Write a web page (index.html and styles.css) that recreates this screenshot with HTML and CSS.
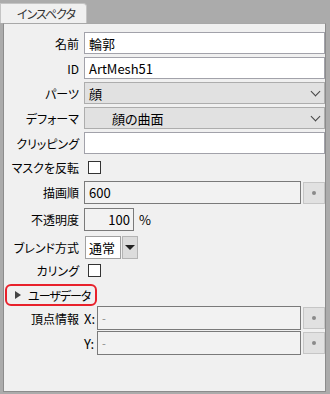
FILE: index.html
```html
<!DOCTYPE html>
<html lang="ja">
<head>
    <meta charset="UTF-8">
    <title>インスペクタ</title>
    <link rel="stylesheet" href="styles.css">
</head>
<body>
    <div class="tab">インスペクタ</div>
    <div class="panel">
        <div class="row">
            <label>名前</label>
            <div class="field text">輪郭</div>
        </div>
        <div class="row">
            <label>ID</label>
            <div class="field text">ArtMesh51</div>
        </div>
        <div class="row">
            <label>パーツ</label>
            <div class="field select">顔<span class="chev"></span></div>
        </div>
        <div class="row">
            <label>デフォーマ</label>
            <div class="field select indent">顔の曲面<span class="chev"></span></div>
        </div>
        <div class="row">
            <label>クリッピング</label>
            <div class="field text"></div>
        </div>
        <div class="row mask">
            <label>マスクを反転</label>
            <span class="check"></span>
        </div>
        <div class="row tall">
            <label>描画順</label>
            <div class="field num">600</div>
            <span class="dotbtn"></span>
        </div>
        <div class="row tall opacity">
            <label>不透明度</label>
            <div class="field num short">100</div>
            <span class="unit">%</span>
        </div>
        <div class="row tall blend">
            <label>ブレンド方式</label>
            <div class="combo"><span class="combo-val">通常</span><span class="combo-btn"></span></div>
        </div>
        <div class="row culling">
            <label>カリング</label>
            <span class="check"></span>
        </div>
        <div class="userdata"><span class="tri"></span>ユーザデータ</div>
        <div class="row vert">
            <label>頂点情報</label>
            <span class="axis">X:</span>
            <div class="field num dim">-</div>
            <span class="dotbtn"></span>
        </div>
        <div class="row vert">
            <label></label>
            <span class="axis">Y:</span>
            <div class="field num dim">-</div>
            <span class="dotbtn"></span>
        </div>
    </div>
</body>
</html>
```

FILE: styles.css
```css
body { margin: 0; background: #ababab; font-family: "Noto Sans CJK JP", "Noto Sans", sans-serif; font-size: 12px; color: #000; font-feature-settings: "palt"; white-space: nowrap; }

.tab { margin-top: 3px; width: 87px; height: 20px; line-height: 20px; box-sizing: border-box; padding-left: 16px; background: #f0f0f0; border: 1px solid #c4c4c4; border-bottom: none; border-top-right-radius: 4px; color: #333; font-size: 12px; letter-spacing: -1px; }

.panel { margin-left: 3px; width: 323px; height: 369px; box-sizing: border-box; background: #f0f0f0; border: 1px solid #8c8c8c; border-top-color: #a8a8a8; padding-top: 8px; display: flex; flex-direction: column; gap: 3px; }

.row { display: flex; align-items: center; height: 22px; }
.row.tall { height: 23px; }
.row.mask { height: 21px; }
.row.opacity { margin-top: 1px; }
.row.blend { margin-top: 2px; }
.row.culling { margin-top: -3px; }
.row label { width: 75px; padding-right: 5px; text-align: right; flex-shrink: 0; }

.field { box-sizing: border-box; height: 100%; display: flex; align-items: center; padding-left: 4px; }
.text { flex: 1; background: #fff; border: 1px solid #a2a2aa; font-size: 13px; }
.select { flex: 1; background: #e1e1e1; border: 1px solid #adadad; font-size: 13px; position: relative; }
.select.indent { padding-left: 27px; }
.chev { position: absolute; right: 5px; top: 5px; width: 6px; height: 6px; border-right: 1px solid #444; border-bottom: 1px solid #444; transform: rotate(45deg); }

.num { flex: 1; background: #f2f2f2; border: 1px solid #7a7a7a; font-size: 13px; }
.num.short { flex: none; width: 50px; justify-content: flex-end; padding-right: 3px; }
.num.dim { color: #888; font-size: 11px; }
.unit { margin-left: 5px; font-size: 13px; }

.dotbtn { width: 22px; height: 22px; margin-left: 2px; box-sizing: border-box; background: #e1e1e1; border: 1px solid #c6c6c6; display: flex; align-items: center; justify-content: center; }
.dotbtn::before { content: ""; width: 4px; height: 4px; border-radius: 50%; background: #8a8a8a; }

.check { width: 13px; height: 13px; box-sizing: border-box; margin-left: 4px; background: #fff; border: 1px solid #333; }

.combo { display: flex; height: 100%; margin-left: 1px; }
.combo-val { width: 36px; box-sizing: border-box; background: #fff; border: 1px solid #a0a0a0; padding-left: 3px; font-size: 13px; display: flex; align-items: center; }
.combo-btn { width: 16px; box-sizing: border-box; margin-left: 1px; background: #dcdcdc; border: 1px solid #b4b4b4; display: flex; align-items: center; justify-content: center; }
.combo-btn::before { content: ""; border-left: 5px solid transparent; border-right: 5px solid transparent; border-top: 5px solid #222; }

.userdata { margin-left: 1px; width: 92px; height: 22px; box-sizing: border-box; border: 2px solid #e8212b; border-radius: 6px; display: flex; align-items: center; padding-left: 8px; font-size: 12px; letter-spacing: -1px; }
.tri { width: 0; height: 0; border-top: 4px solid transparent; border-bottom: 4px solid transparent; border-left: 6px solid #444; margin-right: 7px; }

.row.vert { height: 24px; margin-top: -3px; }
.row.vert + .row.vert { margin-top: -2px; }
.axis { width: 13px; flex-shrink: 0; font-size: 13px; }
```
